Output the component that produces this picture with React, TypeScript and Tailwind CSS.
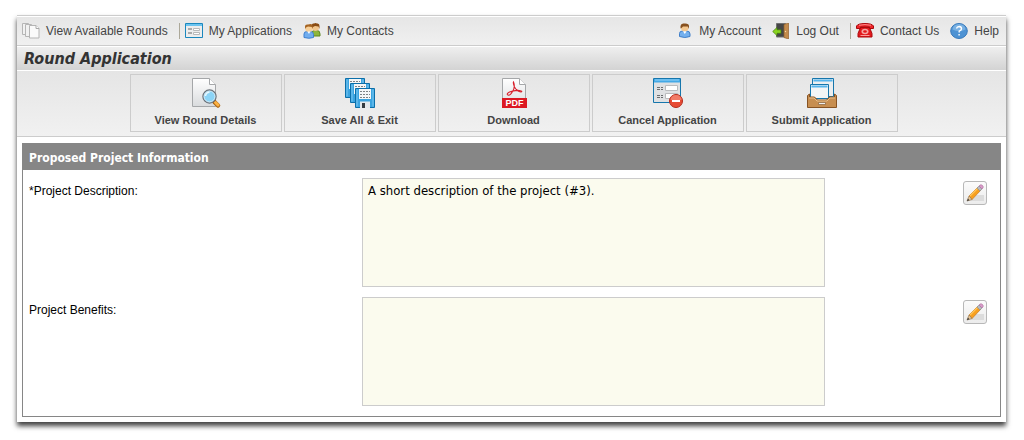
import React from "react";

function PagesIcon() {
  return (
    <svg width="18" height="16" viewBox="0 0 18 16" fill="#f1f1f1" stroke="#b5b5b5">
      <path d="M.5 .5h6v11h-6z" />
      <path d="M3.500 1.500h6v12h-6z" />
      <path d="M7.500 2.500h6.500l3 3v9.500h-9.500z" fill="#fafafa" />
      <path d="M14 2.500v3h3" fill="#fff" stroke="#a8a8a8" />
    </svg>
  );
}

function FormIcon() {
  return (
    <svg width="18" height="16" viewBox="0 0 18 16">
      <path d="M.5 .5h17v14H.5z" fill="#ededed" stroke="#1b87bd" />
      <path d="M1 1h16v2H1z" fill="#6cc4f0" />
      <path d="M3 5h4v2H3zM3 9h4v2H3z" fill="#aaa" />
      <path d="M8.500 5.500h6v2h-6zM8.500 9.500h6v2h-6z" fill="#fff" stroke="#b9b9b9" />
    </svg>
  );
}

function ContactsIcon() {
  return (
    <svg width="18" height="16" viewBox="0 0 18 16">
      <path d="M9 13V9.500Q9 7.500 11.500 7.500H14Q17 7.500 17 11v2z" fill="#8db63c" stroke="#5f8722" />
      <circle cx="12.500" cy="4.500" r="3.500" fill="#f1c68d" />
      <path d="M8.800 5V2Q9 0 11 .600 12.500-.500 14 .500 16.500 0 16.500 3v3l-1-2.500-3.500-.500-2 1z" fill="#8a4c14" />
      <path d="M1 14.500V11q0-2.500 3-2.500h3.500q3 0 3 3v3Q6 16 1 14.500z" fill="#71adee" stroke="#3e7fce" />
      <circle cx="5.800" cy="5.500" r="3.600" fill="#f7cf98" />
      <path d="M2 6V3.500Q2 1 5 1.500 9.500 0 9.700 3v3l-1-2L5 3.500 3 4.500z" fill="#a56422" />
      <path d="M4.500 8.500h2.800L6 11z" fill="#fff" />
    </svg>
  );
}

function PersonIcon() {
  return (
    <svg width="16" height="16" viewBox="0 0 16 16">
      <path d="M2.500 13.500V10.500q0-2.500 3-2.500h4q3.500 0 3.500 3v2.500q-5 2-10.500 0z" fill="#74b0ee" stroke="#417fc8" />
      <circle cx="7.700" cy="4.700" r="3.700" fill="#f3c78f" />
      <path d="M3.500 5.500V3Q4 0 7 .500 12 0 12 3v3l-1.200-2.500H6L4.500 5z" fill="#87501e" />
      <path d="M6 8.300h3.500L7.800 11z" fill="#fff" />
    </svg>
  );
}

function DoorIcon() {
  return (
    <svg width="18" height="16" viewBox="0 0 18 16">
      <path d="M4.500 .5h9V14h-9z" fill="#464646" stroke="#717171" />
      <path d="M12 1.500 16.500 0v16L12 14.500z" fill="#c38b4c" stroke="#93622d" strokeWidth=".7" />
      <circle cx="13.500" cy="8.500" r=".7" fill="#f6dfa5" />
      <path d="M.7 8.500 5 4.500v2.300h4v3.500H5v2.300z" fill="#8ad420" stroke="#427d0c" strokeWidth=".7" />
    </svg>
  );
}

function PhoneIcon() {
  return (
    <svg width="18" height="16" viewBox="0 0 18 16">
      <path d="M4.500 4.500h9l2.500 6v3.500H2v-3.500z" fill="#e3181c" stroke="#a90a0d" />
      <path d="M.5 5.500V3Q2 .5 9 .5t8.500 2.500v2.500h-4V4H4.500v1.500z" fill="#ee252a" stroke="#a90a0d" />
      <path d="M3 2.300q6-1.500 12 0" fill="none" stroke="#f88" />
      <ellipse cx="9" cy="8.500" rx="3.500" ry="2.700" fill="#f4a5a3" />
      <ellipse cx="9" cy="8.500" rx="1.800" ry="1.200" fill="#e3181c" />
      <path d="M4.500 12.500h9" stroke="#f99" />
    </svg>
  );
}

function HelpIcon() {
  return (
    <svg width="18" height="16" viewBox="0 0 18 16">
      <ellipse cx="9" cy="8" rx="8.300" ry="7.500" fill="#4d92d3" stroke="#397abb" />
      <path d="M2.500 6.500a6.500 5.500 0 0 1 13 0Q9 9.500 2.500 6.500z" fill="#78b0e2" />
      <path d="M6.500 5.500Q7 3.500 9.200 3.500q2.300.200 2.300 2.200 0 1.300-2.300 2.500v1.300M9.100 11v1.500" fill="none" stroke="#fff" strokeWidth="1.400" />
    </svg>
  );
}

function DetailsIcon() {
  return (
    <svg width="32" height="32" viewBox="0 0 32 32">
      <defs>
        <linearGradient id="paper" x2="0" y2="1">
          <stop stopColor="#fff" />
          <stop offset="1" stopColor="#d9dbdd" />
        </linearGradient>
      </defs>
      <path d="M2.500 1.500h17l6 6v22h-23z" fill="url(#paper)" stroke="#a5a7a9" />
      <path d="M19.500 1.500v6h6" fill="#fff" stroke="#a5a7a9" />
      <path d="m24.500 25 3.500 3.500" stroke="#ab6515" strokeWidth="4.500" strokeLinecap="round" />
      <path d="m25.500 25.500 2.500 2.500" stroke="#fbb142" strokeWidth="3" strokeLinecap="round" />
      <circle cx="19.500" cy="19.500" r="6.500" fill="#8bd4f7" stroke="#697078" strokeWidth="1.400" />
      <circle cx="19.500" cy="19.500" r="5.500" fill="none" stroke="#d7eefa" />
      <path d="M15.500 19q.5-3.500 4-3.700" stroke="#e8f8ff" strokeWidth="1.500" fill="none" />
    </svg>
  );
}

function Disk({ x, y }: { x: number; y: number }) {
  return (
    <g transform={`translate(${x} ${y})`}>
      <path d="M.5 .5h19v19h-19z" fill="#3ba4e0" stroke="#0c6fa9" />
      <path d="M1.500 1.500h1v17h-1zM17.500 1.500h1v17h-1z" fill="#7cc8f2" />
      <path d="M4 1h12v10H4z" fill="#f5f7f8" />
      <path d="M5 3.500h10M5 6.500h10M5 9.500h10" stroke="#7e8386" strokeDasharray="2 1" />
      <path d="M5 13.500h10V20H5z" fill="#e4e8eb" />
      <path d="M7 15h3v5H7z" fill="#343a3f" />
    </g>
  );
}

function SaveIcon() {
  return (
    <svg width="32" height="32" viewBox="0 0 32 32">
      <Disk x={1} y={1} />
      <Disk x={6} y={6} />
      <Disk x={11} y={11} />
    </svg>
  );
}

function PdfIcon() {
  return (
    <svg width="32" height="32" viewBox="0 0 32 32">
      <path d="M4.500 1.500h17l6 6v23h-23z" fill="url(#paper)" stroke="#a5a7a9" />
      <path d="M21.500 1.500v6h6" fill="#fff" stroke="#a5a7a9" />
      <path d="M4 21h25v10H4z" fill="#dc1822" />
      <path
        d="M15.500 5q2 5-1 9.500-2.500 4.500-4.500 3.500t1.500-3q5-2 10-1.500 3.500.700 1.500 1.500-4-.500-6.500-5-1.700-4-1-5z"
        fill="none"
        stroke="#d8202c"
        strokeWidth="1.100"
      />
      <text x="16.500" y="29" textAnchor="middle" fontSize="9" fontWeight="700" fill="#fff">PDF</text>
    </svg>
  );
}

function CancelIcon() {
  return (
    <svg width="32" height="32" viewBox="0 0 32 32">
      <path d="M1.500 1.500h27v24h-27z" fill="#dfe1e3" stroke="#1676ac" />
      <path d="M2 2h26v3.500H2z" fill="#44a9e6" />
      <path d="M3 3h24" stroke="#94d3f8" />
      <path d="M13.500 8.500h12v5h-12zM13.500 16.500h12v5h-12z" fill="#fff" stroke="#b9bbbd" />
      <path d="M5 10.500h6M5 12.500h6M5 18.500h6M5 20.500h6" stroke="#6c6e70" strokeDasharray="3 1" />
      <circle cx="24" cy="24" r="6.500" fill="#e74c35" stroke="#b42b1b" />
      <path d="M18.500 23a5.500 5 0 0 1 11 0z" fill="#f17b67" />
      <path d="M20 23h8v2h-8z" fill="#fff" />
    </svg>
  );
}

function SubmitIcon() {
  return (
    <svg width="32" height="32" viewBox="0 0 32 32">
      <path d="M6.500 1.500h21v18h-21z" fill="#eceeef" stroke="#1676ac" />
      <path d="M7.500 3.500h19" stroke="#55b5ed" strokeWidth="2" />
      <path d="M4.500 7.500h18v14h-18z" fill="#f3f5f6" stroke="#1676ac" />
      <path d="M5.500 9.500h16" stroke="#55b5ed" strokeWidth="2" />
      <path d="M1.500 18.500 3.500 17v3h5l3 3h9l3-3h5v-3l2 1.500v12h-29z" fill="#c78e50" stroke="#875323" />
      <path d="M3 21h5l3 3h10l3-3h5" fill="none" stroke="#e8be8b" />
      <path d="M12.500 25.500h7v2h-7z" fill="#eee" stroke="#8a6238" strokeWidth=".7" />
    </svg>
  );
}

function PencilIcon() {
  return (
    <svg width="20" height="20" viewBox="0 0 20 20">
      <path d="M7 12h12v6H2z" fill="#dcdcdc" />
      <path d="m4 13 9-9 3 3-9 9.500z" fill="#f8a01e" stroke="#c47a22" strokeWidth=".7" />
      <path d="m5 13 8.500-8.500" stroke="#ffc65c" strokeWidth="1.300" />
      <path d="M4 13 2 18l5-1.500z" fill="#e9c99a" stroke="#8e6b42" strokeWidth=".6" />
      <path d="m3 15.500-1.200 2.700 2.700-.900z" fill="#444" />
      <path d="m12 5 2-2 3 3-2 2z" fill="#b5bac0" stroke="#858a91" strokeWidth=".6" />
      <path d="m14 3 1-1q1.300-.7 2.500.5t.5 2.500l-1 1z" fill="#d99bc9" stroke="#a76c98" strokeWidth=".6" />
    </svg>
  );
}

type NavItem = { label: string; icon: React.ReactNode; divider?: boolean };

const leftNav: NavItem[] = [
  { label: "View Available Rounds", icon: <PagesIcon /> },
  { label: "My Applications", icon: <FormIcon />, divider: true },
  { label: "My Contacts", icon: <ContactsIcon /> },
];

const rightNav: NavItem[] = [
  { label: "My Account", icon: <PersonIcon /> },
  { label: "Log Out", icon: <DoorIcon /> },
  { label: "Contact Us", icon: <PhoneIcon />, divider: true },
  { label: "Help", icon: <HelpIcon /> },
];

const actions = [
  { label: "View Round Details", icon: <DetailsIcon /> },
  { label: "Save All & Exit", icon: <SaveIcon /> },
  { label: "Download", icon: <PdfIcon /> },
  { label: "Cancel Application", icon: <CancelIcon /> },
  { label: "Submit Application", icon: <SubmitIcon /> },
];

const fields = [
  { id: "description", label: "*Project Description:", value: "A short description of the project (#3)." },
  { id: "benefits", label: "Project Benefits:", value: "" },
];

function NavList({ items }: { items: NavItem[] }) {
  return (
    <ul className="flex items-center gap-[11px]">
      {items.map((item) => (
        <li key={item.label} className={item.divider ? "border-l border-[#aca899] pl-[5px]" : ""}>
          <a href="#" className="flex h-4 items-center gap-1.5 whitespace-nowrap">
            {item.icon}
            {item.label}
          </a>
        </li>
      ))}
    </ul>
  );
}

export default function App() {
  return (
    <div className="bg-white pt-[15px] pr-[18px] pb-[18px] pl-[17px] font-['Liberation_Sans',Arial,sans-serif] text-[#444]">
      <div className="border-t border-[#ccc] bg-white shadow-[0_4px_5px_rgba(0,0,0,0.75)]">
        <nav className="mt-px flex h-[29px] items-center justify-between border-b border-[#ccc] bg-linear-to-b from-[#e6e6e6] to-[#f0f0f0] pr-[7px] pb-px pl-[5px] text-xs">
          <NavList items={leftNav} />
          <NavList items={rightNav} />
        </nav>
        <h1 className="mt-px flex h-[23px] items-center bg-linear-to-b from-[#efefef] to-[#d3d3d3] px-[7px] font-['DejaVu_Sans_Condensed','DejaVu_Sans',sans-serif] text-base font-bold text-[#333] italic">
          Round Application
        </h1>
        <div className="mt-px flex h-[66px] justify-center gap-0.5 border-b border-[#ccc] bg-linear-to-b from-[#e5e5e5] to-[#f1f1f1] pt-[3px] pl-1">
          {actions.map((action) => (
            <button
              key={action.label}
              type="button"
              className="flex h-[58px] w-[152px] flex-col items-center border border-[#ccc] pt-0.5 text-[11px] font-bold whitespace-nowrap"
            >
              {action.icon}
              <span className="mt-[3px] leading-4">{action.label}</span>
            </button>
          ))}
        </div>
        <div className="px-[5px] pt-1.5 pb-[5px]">
          <section className="border border-[#868686] pb-2.5">
            <h2 className="h-[26px] bg-[#868686] px-1.5 font-['DejaVu_Sans_Condensed','DejaVu_Sans',sans-serif] text-xs leading-7 font-bold text-white">
              Proposed Project Information
            </h2>
            <div className="flex flex-col gap-2.5 pt-2">
              {fields.map((field) => (
                <div key={field.id} className="flex items-start pr-[13px] pl-1.5 text-black">
                  <label htmlFor={field.id} className="w-[333px] pt-[5px] text-xs leading-4">
                    {field.label}
                  </label>
                  <textarea
                    id={field.id}
                    readOnly
                    defaultValue={field.value}
                    className="block h-[109px] w-[463px] resize-none border border-[#ccc] bg-[#fbfbee] px-[5px] py-1 font-['DejaVu_Sans_Condensed','DejaVu_Sans',sans-serif] text-[13px] leading-4"
                  />
                  <button
                    type="button"
                    aria-label="Edit"
                    className="mt-[3px] ml-auto flex size-6 items-center justify-center rounded-[3px] border border-[#b8b8b8] bg-linear-to-b from-[#fbfbfb] to-[#ececec]"
                  >
                    <PencilIcon />
                  </button>
                </div>
              ))}
            </div>
          </section>
        </div>
      </div>
    </div>
  );
}
